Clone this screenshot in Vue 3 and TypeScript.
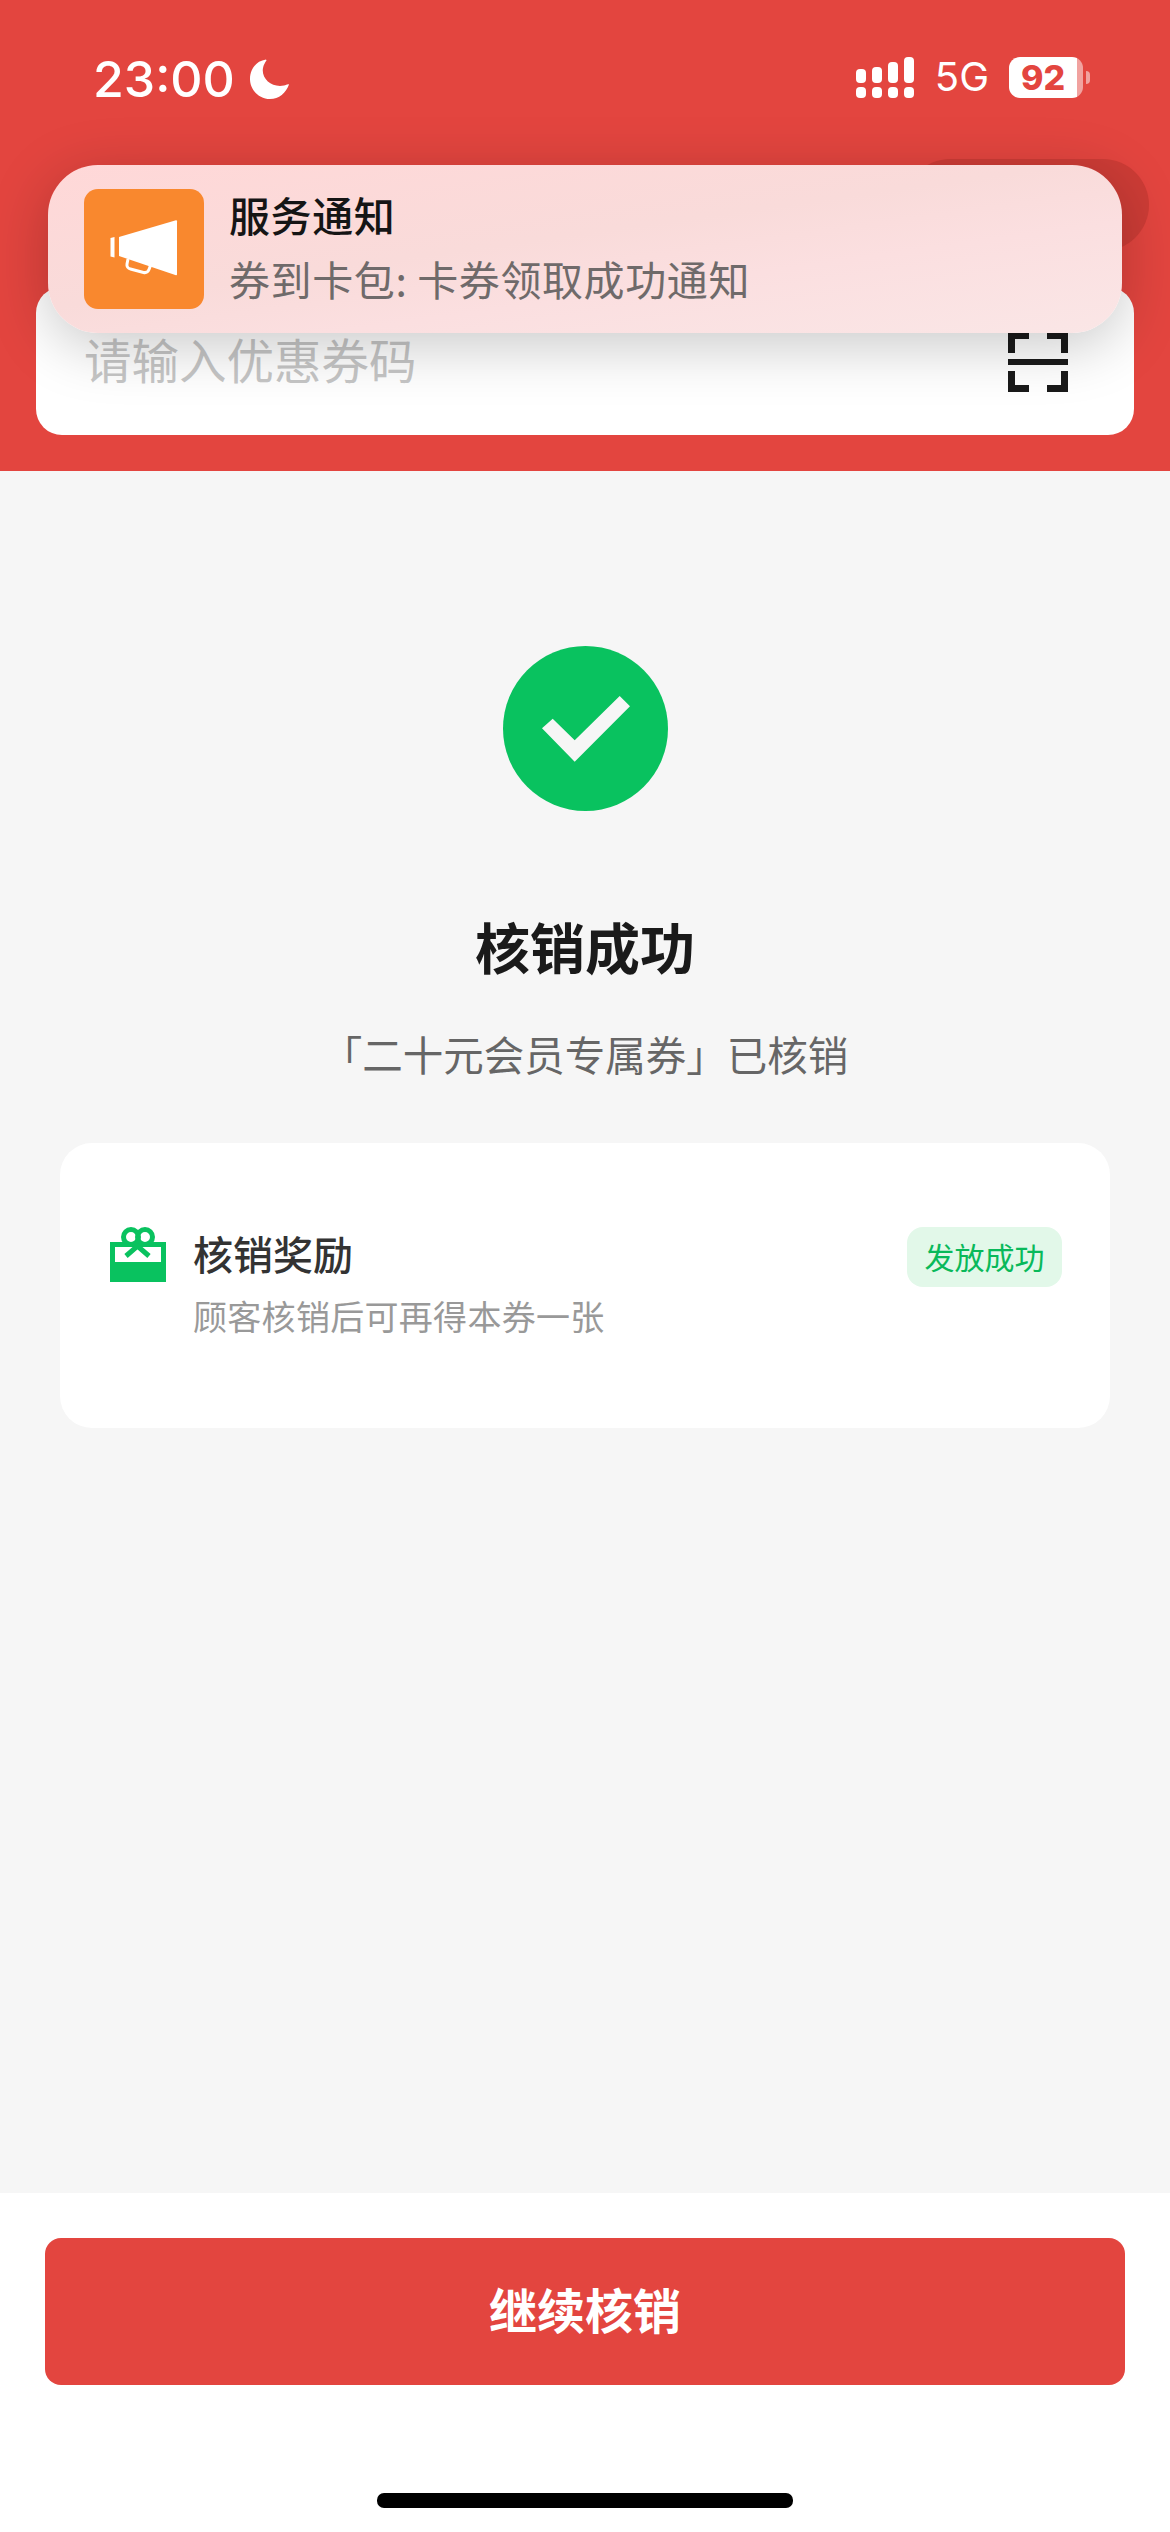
<template>
  <div class="page">
    <header class="top">
      <div class="status">
        <div class="status-left">
          <span class="time">23:00</span>
          <svg class="moon" width="40" height="40" viewBox="0 0 40 40">
            <path d="M16 .5C6 2 0 10 0 20c0 11 9 20 20 20 9 0 16-6 19-14.500-1-1-3 .5-5 1C22 29 11 20 13 9c.5-3 2-5.500 3.500-7.500z" fill="#fff" />
          </svg>
        </div>
        <div class="status-right">
          <div class="signal">
            <div v-for="h in barHeights" :key="h" class="signal-col">
              <i class="signal-bar" :style="{ height: h + 'px' }"></i>
              <i class="signal-dot"></i>
            </div>
          </div>
          <span class="net">5G</span>
          <div class="battery">
            <div class="battery-body"><span>92</span></div>
            <i class="battery-cap"></i>
          </div>
        </div>
      </div>
      <div class="search">
        <span class="placeholder">请输入优惠券码</span>
        <svg class="scan" width="60" height="60" viewBox="0 0 60 60" fill="none" stroke="#1a1a1a" stroke-width="7">
          <path d="M3.500 21V3.500H21M39 3.500h17.500V21M3.500 39v17.500H21M39 56.500h17.500V39" />
          <path d="M0 30h60" stroke-width="6" />
        </svg>
      </div>
      <div class="pill"></div>
      <div class="notice">
        <div class="notice-icon">
          <svg width="68" height="68" viewBox="0 0 68 58">
            <path d="M0.500 18l4-1v20.500l-4-1z" fill="#fff" />
            <path d="M9 17L66 0.300c.6 0 1 .5 1 1v53c0 .6-.5 1-1 1L9 36z" fill="#fff" />
            <path d="M18 39l-1 5c-.5 2.500 1 4.500 3.500 5l13 3.500c2.500.5 4.500-.5 5.500-3l1.500-4" fill="none" stroke="#fff" stroke-width="3" />
          </svg>
        </div>
        <div class="notice-text">
          <div class="notice-title">服务通知</div>
          <div class="notice-sub">券到卡包: 卡券领取成功通知</div>
        </div>
      </div>
    </header>

    <main class="result">
      <svg class="check" width="165" height="165" viewBox="0 0 165 165">
        <circle cx="82.500" cy="82.500" r="82.500" fill="#09c25f" />
        <path d="M39 82.300L49.700 72.700 71.700 94.300 116.700 50 127 60.300 71.700 115.700z" fill="#f6f6f6" />
      </svg>
      <h1 class="result-title">核销成功</h1>
      <p class="result-desc">「二十元会员专属券」已核销</p>

      <section class="reward">
        <svg class="gift" width="56" height="56" viewBox="0 0 56 56">
          <circle cx="21" cy="10" r="7.500" fill="none" stroke="#09c25f" stroke-width="5" />
          <circle cx="35" cy="10" r="7.500" fill="none" stroke="#09c25f" stroke-width="5" />
          <path d="M0 15h56v40H0z" fill="#09c25f" />
          <path d="M5 20h46v15H5z" fill="#fff" />
          <path d="M16 29l11.500-10 11.500 10" fill="none" stroke="#09c25f" stroke-width="5" />
        </svg>
        <div class="reward-text">
          <div class="reward-title">核销奖励</div>
          <div class="reward-sub">顾客核销后可再得本券一张</div>
        </div>
        <span class="reward-badge">发放成功</span>
      </section>
    </main>

    <footer class="bottom">
      <button class="continue">继续核销</button>
      <div class="home-bar"></div>
    </footer>
  </div>
</template>

<script setup lang="ts">
// signal bars, left to right
const barHeights: number[] = [14, 16, 21, 26];
</script>

<style scoped>
.page {
  width: 1170px;
  height: 2532px;
  display: flex;
  flex-direction: column;
  background: #f6f6f6;
  font-family: "Noto Sans CJK SC", "Noto Sans", sans-serif;
  overflow: hidden;
}

.top {
  position: relative;
  height: 471px;
  box-sizing: border-box;
  padding: 56px 36px 0;
  background: #e3453f;
}

.status {
  display: flex;
  justify-content: space-between;
  height: 42px;
  padding: 0 44px 0 57px;
}

.status-left {
  display: flex;
  align-items: center;
  gap: 15px;
  padding-top: 3px;
}

.time {
  font-family: Inter, sans-serif;
  font-size: 50px;
  font-weight: 500;
  line-height: 42px;
  color: #fff;
}

.status-right {
  display: flex;
  align-items: center;
}

.signal {
  display: flex;
  gap: 6px;
}

.signal-col {
  display: flex;
  flex-direction: column;
  justify-content: flex-end;
  gap: 4px;
  height: 42px;
}

.signal-bar,
.signal-dot {
  display: block;
  width: 10px;
  border-radius: 4px;
  background: #fff;
}

.signal-dot {
  height: 11px;
}

.net {
  margin: 0 20px 0 21px;
  font-family: Inter, sans-serif;
  font-size: 40px;
  line-height: 42px;
  color: #fff;
}

.battery {
  display: flex;
  align-items: center;
}

.battery-body {
  width: 74px;
  height: 41px;
  box-sizing: border-box;
  border-radius: 11px;
  display: flex;
  align-items: center;
  justify-content: center;
  padding-right: 6px;
  background: linear-gradient(to right, #fff 68px, rgba(255, 255, 255, 0.5) 68px);
  font-family: Inter, sans-serif;
  font-size: 34px;
  font-weight: 800;
  color: #e3453f;
}

.battery-cap {
  width: 4px;
  height: 13px;
  margin-left: 3px;
  border-radius: 0 7px 7px 0;
  background: rgba(255, 255, 255, 0.5);
}

.search {
  height: 148px;
  margin-top: 189px;
  border-radius: 26px;
  display: flex;
  align-items: center;
  justify-content: space-between;
  padding: 0 66px 0 48px;
  background: #fff;
}

.placeholder {
  margin-bottom: 6px;
  font-size: 47.500px;
  color: #c6c6c6;
}

.scan {
  margin-top: 2px;
}

/* dark button peeking out from under the banner */
.pill {
  position: absolute;
  top: 159px;
  right: 21px;
  width: 245px;
  height: 92px;
  border-radius: 46px;
  background: #cd3c36;
}

.notice {
  position: absolute;
  top: 165px;
  left: 48px;
  width: 1074px;
  height: 168px;
  box-sizing: border-box;
  padding: 24px 36px;
  border-radius: 50px;
  display: flex;
  gap: 25px;
  background: linear-gradient(172deg, #ffd8d8, #f9dbda 45%, #fbdfe0 65%, #fae6e6);
  box-shadow: 0 12px 60px rgba(0, 0, 0, 0.22);
}

.notice-icon {
  width: 120px;
  height: 120px;
  flex-shrink: 0;
  display: flex;
  align-items: center;
  justify-content: center;
  border-radius: 14px;
  background: #f9882e;
}

.notice-text {
  display: flex;
  flex-direction: column;
  gap: 8px;
  margin-top: -3px;
}

.notice-title {
  font-size: 41px;
  line-height: 56px;
  font-weight: 500;
  letter-spacing: 0.6px;
  color: #151515;
}

.notice-sub {
  font-size: 41px;
  line-height: 56px;
  letter-spacing: 0.6px;
  color: #6f6a6a;
}

.result {
  flex: 1;
  display: flex;
  flex-direction: column;
  align-items: center;
  padding: 175px 60px 0;
}

.result-title {
  margin: 95px 0 0;
  font-size: 55px;
  line-height: 78px;
  font-weight: 700;
  color: #1a1a1a;
}

.result-desc {
  margin: 40px 0 0;
  font-size: 40.500px;
  line-height: 60px;
  color: #666;
}

.reward {
  width: 100%;
  height: 285px;
  box-sizing: border-box;
  margin-top: 59px;
  padding: 84px 48px 0 50px;
  border-radius: 32px;
  display: flex;
  align-items: flex-start;
  background: #fff;
}

.gift {
  margin-right: 27px;
  flex-shrink: 0;
}

.reward-text {
  flex: 1;
  margin-top: -2px;
}

.reward-title {
  font-size: 40px;
  line-height: 56px;
  font-weight: 500;
  color: #333;
}

.reward-sub {
  margin-top: 11px;
  font-size: 34px;
  line-height: 48px;
  letter-spacing: 0.3px;
  color: #999;
}

.reward-badge {
  width: 155px;
  height: 60px;
  border-radius: 16px;
  text-align: center;
  font-size: 30px;
  line-height: 58px;
  color: #09b95a;
  background: #e2f8e9;
}

.bottom {
  height: 339px;
  box-sizing: border-box;
  padding: 45px 45px 0;
  background: #fff;
}

.continue {
  display: block;
  width: 100%;
  height: 147px;
  padding: 0 0 7px;
  border: 0;
  border-radius: 16px;
  font-family: inherit;
  font-size: 48px;
  font-weight: 700;
  color: #fff;
  background: #e3453f;
}

.home-bar {
  width: 416px;
  height: 15px;
  margin: 108px auto 0;
  border-radius: 7px;
  background: #000;
}
</style>
